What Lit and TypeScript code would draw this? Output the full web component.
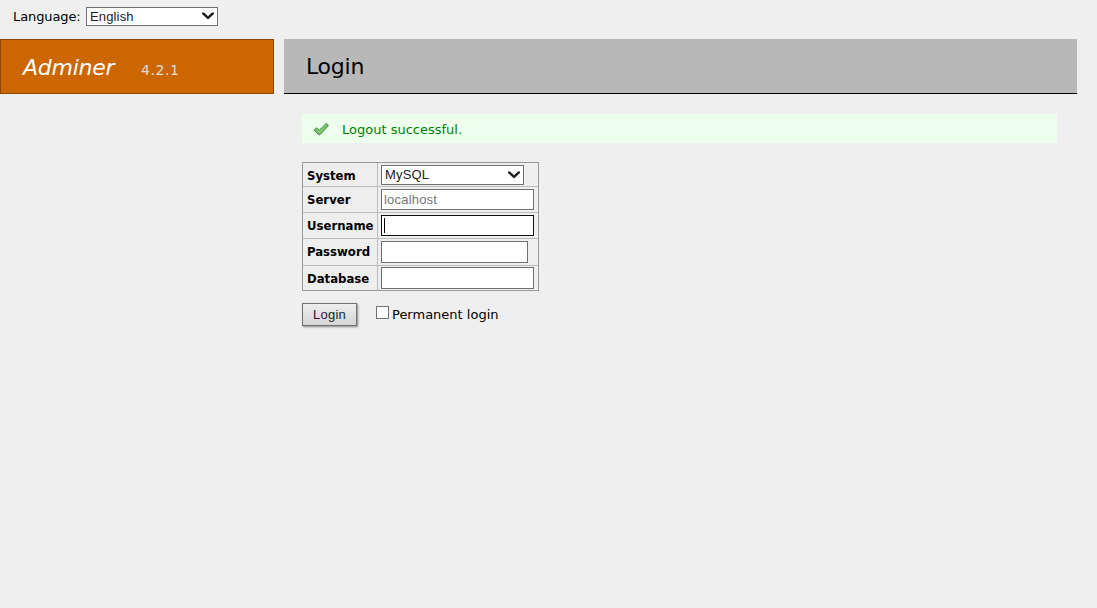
import { LitElement, html, css } from "lit";
import { customElement } from "lit/decorators.js";

const chevron = html`<svg class="chevron" viewBox="0 0 12 8" width="12" height="8">
  <path d="M0 0.5 L2 0.5 L6 4.2 L10 0.5 L12 0.5 L12 2 L6 7.6 L0 2 Z" fill="#1e1e1e" />
</svg>`;

@customElement("app-root")
export class AppRoot extends LitElement {
  static styles = css`
    * { box-sizing: border-box; }
    :host {
      display: block;
      height: 608px;
      overflow: hidden;
      background: #efefef;
      color: #000;
      font: 13px/16px "DejaVu Sans", Verdana, sans-serif;
      white-space: nowrap;
    }
    .language {
      display: flex;
      height: 39px;
      padding: 7px 0 0 13px;
    }
    .language label { width: 73px; padding-top: 2px; letter-spacing: -0.1px; }
    .field {
      display: flex;
      align-items: center;
      border: 1px solid #707070;
      background: #fff;
      font: 13px/16px "Liberation Sans", Arial, sans-serif;
      color: #222;
      padding: 0 2px;
      width: 153px;
      height: 21px;
    }
    .select { justify-content: space-between; padding: 0 3px 0 3px; letter-spacing: 0.15px; }
    .lang { width: 132px; height: 19px; }
    .chevron { margin-top: -1px; }
    .bars { display: flex; gap: 10px; height: 55px; }
    .brand {
      width: 274px;
      display: flex;
      align-items: baseline;
      background: #cc6600;
      border: 1px solid #8f4700;
      padding: 14px 0 0 22px;
      color: #fff;
    }
    .name { width: 118px; font-size: 22px; line-height: 27px; font-style: italic; letter-spacing: -0.25px; }
    .version { font-size: 14px; color: #ddd; letter-spacing: 0.6px; }
    .title {
      width: 793px;
      margin: 0;
      background: #b8b8b8;
      border-bottom: 1px solid #000;
      padding: 14px 0 0 22px;
      font-weight: normal;
      font-size: 22px;
      line-height: 27px;
      letter-spacing: -0.25px;
    }
    .content { padding: 20px 40px 0 302px; }
    .message {
      height: 29px;
      display: flex;
      align-items: center;
      background: #eeffee;
      color: #008000;
      padding: 2px 0 0 11px;
    }
    .tick { width: 17px; height: 15px; margin: -1px 12px 0 0; }
    .table {
      display: grid;
      width: 237px;
      margin-top: 19px;
      grid-template-rows: 24px 26px 26px 27px 25px;
      border: solid #999;
      border-width: 0 1px 1px 1px;
      height: 129px;
    }
    .row { display: grid; grid-template-columns: 74px 161px; border-top: 1px solid #bbb; }
    .row:first-child { border-color: #999; }
    .head {
      display: flex;
      padding: 5px 0 0 4px;
      font-family: "DejaVu Sans Condensed", "DejaVu Sans", sans-serif;
      font-stretch: condensed;
      font-weight: bold;
      background: #eee;
    }
    .cell { border-left: 1px solid #bbb; padding: 2px 0 0 3px; }
    .row:last-child .cell { padding-top: 1px; }
    .system { width: 143px; height: 20px; }
    .tall { height: 22px; }
    .password { width: 147px; }
    .hint { color: #757575; letter-spacing: 0.2px; }
    .active { border-color: #101010; }
    .caret { width: 1px; height: 15px; background: #000; }
    .actions { display: flex; margin-top: 12px; }
    .button {
      width: 55px;
      height: 23px;
      margin: 0 19px 0 0;
      padding: 0;
      border: 1px solid #707070;
      background: linear-gradient(#eee, #d5d5d5);
      box-shadow: 1px 1px 2px #888;
      font: 13px/20px "Liberation Sans", Arial, sans-serif;
      letter-spacing: 0.2px;
      color: #222;
    }
    .box { width: 13px; height: 13px; margin: 3px 3px 0 0; border: 1px solid #707070; background: #fff; }
    .perm { padding-top: 4px; }
  `;

  private row(label: string, control: unknown) {
    return html`<div class="row"><div class="head"><span>${label}</span></div><div class="cell">${control}</div></div>`;
  }

  render() {
    return html`
      <div class="language">
        <label>Language:</label>
        <div class="field select lang"><span>English</span>${chevron}</div>
      </div>
      <div class="bars">
        <div class="brand"><span class="name">Adminer</span><span class="version">4.2.1</span></div>
        <h2 class="title">Login</h2>
      </div>
      <div class="content">
        <div class="message">
          <svg class="tick" viewBox="0 0 17 15">
            <path d="M1.2 8 L3.6 5.8 L6.4 8.3 L13.1 1.5 L15.5 3.5 L6.9 12.8 L5.8 12.8 Z"
              fill="#72bd65" stroke="#438b43" stroke-width="1" />
            <path d="M3 7.6 L6.4 10.3 L13 3.2" fill="none" stroke="#99d58e" stroke-width="1" />
          </svg>
          <span>Logout successful.</span>
        </div>
        <div class="table">
          ${this.row("System", html`<div class="field select system"><span>MySQL</span>${chevron}</div>`)}
          ${this.row("Server", html`<div class="field hint">localhost</div>`)}
          ${this.row("Username", html`<div class="field active"><span class="caret"></span></div>`)}
          ${this.row("Password", html`<div class="field tall password"></div>`)}
          ${this.row("Database", html`<div class="field tall"></div>`)}
        </div>
        <div class="actions">
          <button class="button">Login</button>
          <span class="box"></span>
          <span class="perm">Permanent login</span>
        </div>
      </div>
    `;
  }
}
